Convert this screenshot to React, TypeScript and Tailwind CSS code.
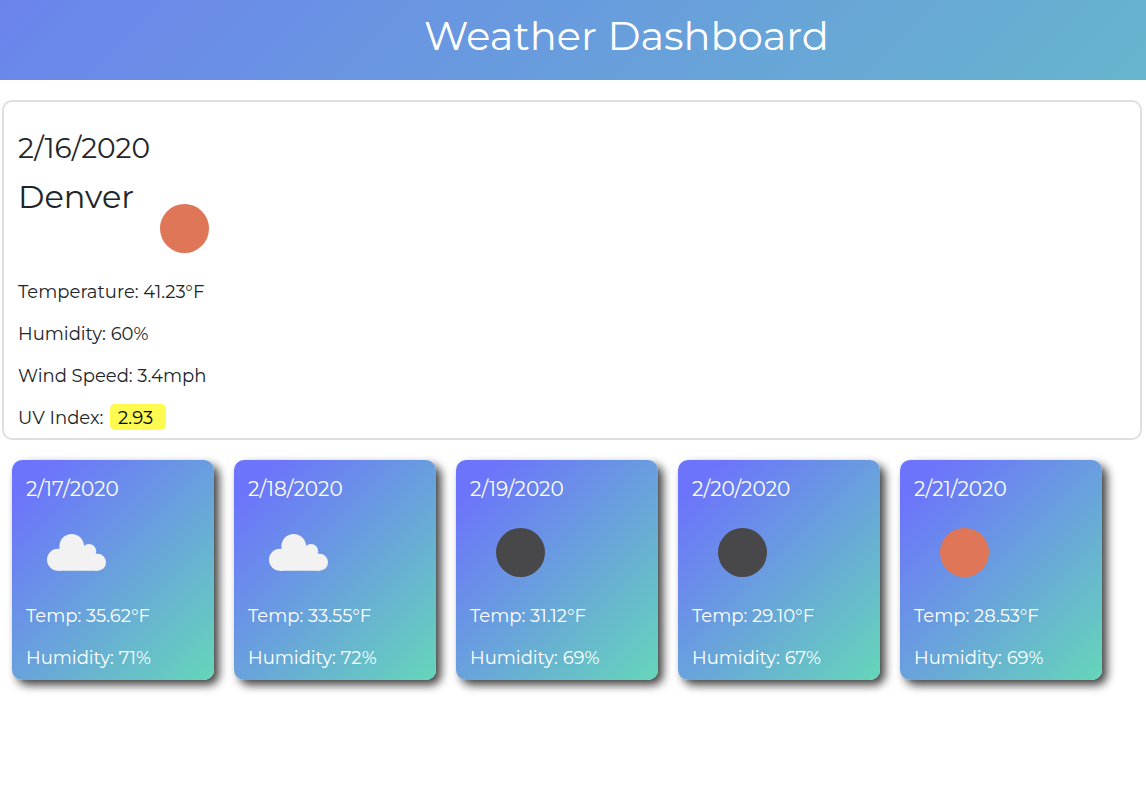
type IconKind = "sun" | "cloud" | "moon";

type Day = {
  date: string;
  icon: IconKind;
  label: string;
  temp: string;
  humidity: string;
};

const days: Day[] = [
  { date: "2/17/2020", icon: "cloud", label: "Cloudy", temp: "35.62", humidity: "71" },
  { date: "2/18/2020", icon: "cloud", label: "Cloudy", temp: "33.55", humidity: "72" },
  { date: "2/19/2020", icon: "moon", label: "Clear night", temp: "31.12", humidity: "69" },
  { date: "2/20/2020", icon: "moon", label: "Clear night", temp: "29.10", humidity: "67" },
  { date: "2/21/2020", icon: "sun", label: "Sunny", temp: "28.53", humidity: "69" },
];

function WeatherIcon({ kind, label }: { kind: IconKind; label: string }) {
  return (
    <svg className="block size-[100px] shrink-0" viewBox="0 0 100 100" role="img" aria-label={label}>
      {kind === "sun" && <circle cx="50.5" cy="50.5" r="24.5" fill="#de7657" />}
      {kind === "moon" && <circle cx="50.5" cy="50.5" r="24.5" fill="#48484a" />}
      {kind === "cloud" && (
        <g fill="#f2f2f2">
          <circle cx="32" cy="57.8" r="11" />
          <circle cx="45.700" cy="44.300" r="12.300" />
          <circle cx="63" cy="49.200" r="7.200" />
          <circle cx="71.500" cy="60.300" r="8.500" />
          <path d="M32 68.800V47H34L58 44L70 51.800H71.500V68.800Z" />
        </g>
      )}
    </svg>
  );
}

function DayCard({ day }: { day: Day }) {
  return (
    <article className="w-[202px] rounded-[10px] bg-[linear-gradient(135deg,#6c74fb_10%,#65d6b9_100%)] px-[14px] pt-4 pb-2 text-white shadow-[5px_5px_10px_0px_rgba(0,0,0,0.75)]">
      <h3 className="text-xl leading-[26px] whitespace-nowrap">{day.date}</h3>
      <WeatherIcon kind={day.icon} label={day.label} />
      <p className="leading-7 whitespace-nowrap">Temp: {day.temp}°F</p>
      <p className="mt-[14px] leading-7 whitespace-nowrap">Humidity: {day.humidity}%</p>
    </article>
  );
}

export default function App() {
  return (
    <div className="min-h-screen bg-white font-['Montserrat','Inter',sans-serif] text-lg text-[#212529]">
      <header className="bg-[linear-gradient(135deg,#6b84ed_0%,#66b5cd_100%)] pt-3 pb-5 pl-[107px] text-center text-white">
        <h1 className="text-[40px] leading-[48px]">Weather Dashboard</h1>
      </header>

      <main>
        <section className="mt-5 mr-1 ml-0.5 rounded-[10px] border-2 border-[#dfdfdf] px-[14px] pt-7 pb-1.5">
          <h2 className="text-[28px] leading-9">2/16/2020</h2>
          <div className="flex">
            <h2 className="pt-3 text-[32px] leading-[38px]">Denver</h2>
            <div className="pt-3">
              <WeatherIcon kind="sun" label="Sunny" />
            </div>
          </div>
          <div className="space-y-[14px] leading-7">
            <p>Temperature: 41.23°F</p>
            <p>Humidity: 60%</p>
            <p>Wind Speed: 3.4mph</p>
            <p>
              UV Index:{" "}
              <span className="ml-0.5 inline-block rounded-[5px] bg-[#fffa50] pt-0.5 pr-[13px] pl-2 leading-6 text-black">2.93</span>
            </p>
          </div>
        </section>

        <section aria-label="Five day forecast" className="mt-5 flex flex-wrap gap-5 px-3 pb-5">
          {days.map((day) => (
            <DayCard key={day.date} day={day} />
          ))}
        </section>
      </main>
    </div>
  );
}
